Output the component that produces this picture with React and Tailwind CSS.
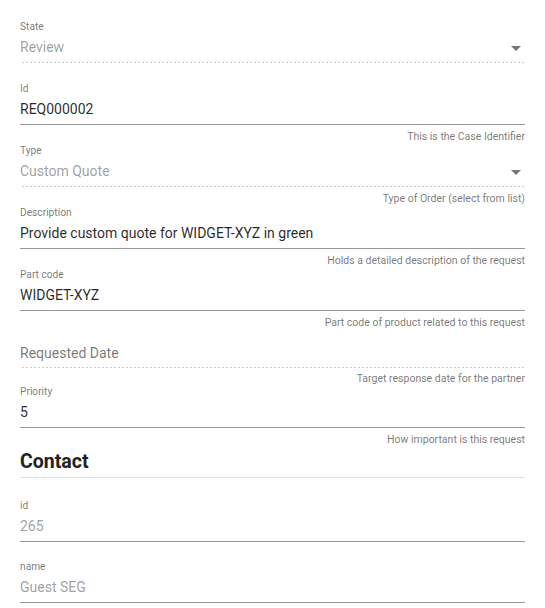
import React from "react";

const dotted =
  "bg-[linear-gradient(to_right,rgba(0,0,0,0.42)_0%,rgba(0,0,0,0.42)_33%,transparent_0%)] bg-[length:4px_1px] bg-repeat-x bg-bottom";

const Caret = () => (
  <svg width="10" height="5" viewBox="0 0 10 5" className="absolute right-[4px] top-[9px]">
    <path d="M0 0 L10 0 L5 5 Z" fill="rgba(0,0,0,0.54)" />
  </svg>
);

const Field = ({ label, value, hint, muted, select, disabled, tall = true }) => (
  <div className={`flex flex-col ${tall ? "h-[62px]" : "h-[61px]"}`}>
    <div className="h-[14px] text-[10.2px] leading-[14px] text-black/55">{label}</div>
    <div
      className={`relative mt-[3px] h-[26px] pb-[5px] text-[14px] leading-[20px] ${
        muted ? "text-black/40" : "text-black/85"
      } ${disabled ? dotted : "border-b border-black/40"}`}
    >
      {value}
      {select && <Caret />}
    </div>
    {hint && (
      <div className="mt-[5px] text-right text-[10.5px] leading-[14px] text-black/55">{hint}</div>
    )}
  </div>
);

export default function App() {
  return (
    <div className="min-h-screen bg-white px-5 pt-[20px] font-['Roboto',sans-serif]">
      <Field label="State" value="Review" muted select disabled />
      <Field label="Id" value="REQ000002" hint="This is the Case Identifier" />
      <Field
        label="Type"
        value="Custom Quote"
        muted
        select
        disabled
        hint="Type of Order (select from list)"
      />
      <Field
        label="Description"
        value="Provide custom quote for WIDGET-XYZ in green"
        hint="Holds a detailed description of the request"
      />
      <Field
        label="Part code"
        value="WIDGET-XYZ"
        hint="Part code of product related to this request"
      />

      {/* date field has no floating label */}
      <div className="flex h-[55px] flex-col">
        <div className={`mt-[13px] h-[26px] pb-[5px] text-[14px] leading-[20px] text-black/55 ${dotted}`}>
          Requested Date
        </div>
        <div className="mt-[4px] text-right text-[10.5px] leading-[14px] text-black/55">
          Target response date for the partner
        </div>
      </div>

      <Field label="Priority" value="5" hint="How important is this request" />

      <div className="mt-[3px] border-b border-[#e0e0e0] pb-[3px] text-[19.5px] font-bold leading-[24px] text-[#222]">
        Contact
      </div>

      <div className="pt-[21px]">
        <Field label="id" value="265" muted tall={false} />
        <Field label="name" value="Guest SEG" muted tall={false} />
      </div>
    </div>
  );
}
